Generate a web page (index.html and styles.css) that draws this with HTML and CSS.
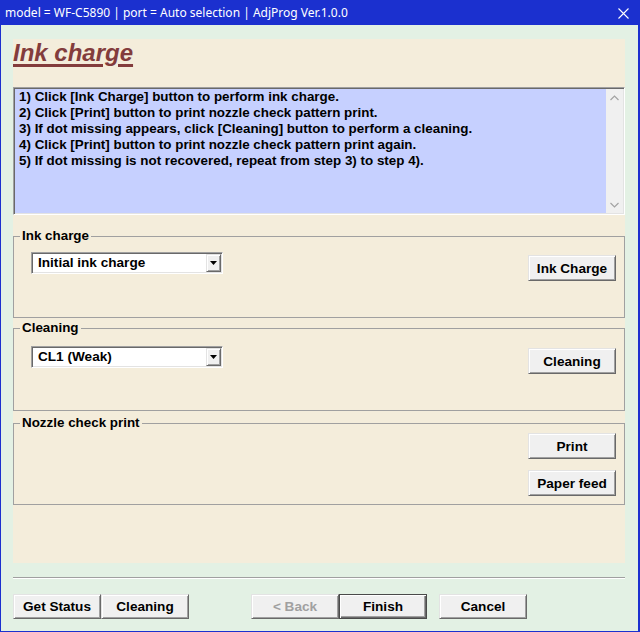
FILE: index.html
```html
<!DOCTYPE html>
<html lang="en">
<head>
    <meta charset="UTF-8">
    <title>AdjProg - Ink charge</title>
    <link rel="stylesheet" href="styles.css">
</head>
<body>
    <div class="window">
        <div class="titlebar">
            <span class="title-text">model = WF-C5890 | port = Auto selection | AdjProg Ver.1.0.0</span>
            <svg class="close-icon" width="11" height="11" viewBox="0 0 11 11">
                <path d="M0.5 0.5 L10.5 10.5 M10.5 0.5 L0.5 10.5" stroke="#fff" stroke-width="1.1" fill="none"/>
            </svg>
        </div>

        <div class="client">
            <div class="panel">
                <h1 class="page-title">Ink charge</h1>

                <div class="info-box">
                    <div class="info-text">
                        <p>1) Click [Ink Charge] button to perform ink charge.</p>
                        <p>2) Click [Print] button to print nozzle check pattern print.</p>
                        <p>3) If dot missing appears, click [Cleaning] button to perform a cleaning.</p>
                        <p>4) Click [Print] button to print nozzle check pattern print again.</p>
                        <p>5) If dot missing is not recovered, repeat from step 3) to step 4).</p>
                    </div>
                    <div class="scrollbar">
                        <svg width="9" height="6" viewBox="0 0 9 6"><path d="M0.5 5 L4.5 1 L8.5 5" stroke="#a3a3a3" stroke-width="1.2" fill="none"/></svg>
                        <svg width="9" height="6" viewBox="0 0 9 6"><path d="M0.5 1 L4.5 5 L8.5 1" stroke="#a3a3a3" stroke-width="1.2" fill="none"/></svg>
                    </div>
                </div>

                <fieldset class="group group-ink">
                    <legend>Ink charge</legend>
                    <div class="group-body">
                        <div class="combo">
                            <span class="combo-value">Initial ink charge</span>
                            <span class="combo-btn"><svg width="7" height="4" viewBox="0 0 7 4"><path d="M0 0 H7 L3.5 4 Z" fill="#000"/></svg></span>
                        </div>
                        <div class="btn-col">
                            <button class="btn">Ink Charge</button>
                        </div>
                    </div>
                </fieldset>

                <fieldset class="group group-clean">
                    <legend>Cleaning</legend>
                    <div class="group-body">
                        <div class="combo">
                            <span class="combo-value">CL1 (Weak)</span>
                            <span class="combo-btn"><svg width="7" height="4" viewBox="0 0 7 4"><path d="M0 0 H7 L3.5 4 Z" fill="#000"/></svg></span>
                        </div>
                        <div class="btn-col">
                            <button class="btn">Cleaning</button>
                        </div>
                    </div>
                </fieldset>

                <fieldset class="group group-nozzle">
                    <legend>Nozzle check print</legend>
                    <div class="group-body">
                        <div class="btn-col">
                            <button class="btn">Print</button>
                            <button class="btn">Paper feed</button>
                        </div>
                    </div>
                </fieldset>
            </div>

            <div class="separator"></div>

            <div class="footer">
                <button class="btn btn-foot">Get Status</button>
                <button class="btn btn-foot">Cleaning</button>
                <button class="btn btn-foot btn-back" disabled>&lt; Back</button>
                <button class="btn btn-foot btn-default">Finish</button>
                <button class="btn btn-foot btn-cancel">Cancel</button>
            </div>
        </div>
    </div>
</body>
</html>
```

FILE: styles.css
```css
* {
    margin: 0;
    padding: 0;
    box-sizing: border-box;
}
body {
    background: #e3f1e4;
    font-family: "Liberation Sans", Arial, sans-serif;
    color: #000;
}
.window {
    width: 640px;
    height: 632px;
    display: flex;
    flex-direction: column;
}

/* title bar */
.titlebar {
    height: 25px;
    background: #1b30cf;
    display: flex;
    align-items: center;
    justify-content: space-between;
    padding: 0 11px 0 5px;
}
.title-text {
    font-family: "Noto Sans", "Open Sans", sans-serif;
    font-size: 12px;
    color: #fff;
    line-height: 25px;
}
.close-icon {
    display: block;
    margin-top: 1px;
}

/* client area */
.client {
    flex: 1;
    background: #e3f1e4;
    border: solid #1b30cf;
    border-width: 0 2px 1px 1px;
    padding: 14px 13px 0 12px;
}
.panel {
    height: 524px;
    background: #f4eddb;
}
.page-title {
    font-size: 24px;
    line-height: 28px;
    font-weight: bold;
    font-style: italic;
    color: #833c3c;
    text-decoration: underline;
    text-decoration-thickness: 3px;
    text-underline-offset: 3px;
    display: inline-block;
}

/* instructions box */
.info-box {
    margin-top: 20px;
    height: 128px;
    display: flex;
    background: #c6d0ff;
    border: 1px solid;
    border-color: #a0a0a0 #fff #fff #a0a0a0;
    box-shadow: inset 1px 1px 0 #696969, inset -1px -1px 0 #e3e3e3;
}
.info-text {
    flex: 1;
    padding: 1px 5px;
    font-size: 13.4px;
    line-height: 16px;
    font-weight: bold;
}
.scrollbar {
    width: 17px;
    margin: 1px 1px 1px 0;
    background: #f0f0f0;
    display: flex;
    flex-direction: column;
    justify-content: space-between;
    align-items: center;
    padding: 6px 0 5px;
}
.scrollbar svg {
    display: block;
}

/* group boxes */
.group {
    border: 1px solid #a0a0a0;
    padding: 0 8px 0 6px;
}
.group legend {
    padding: 0 2px;
    font-size: 13.4px;
    line-height: 16px;
    font-weight: bold;
}
.group-body {
    display: flex;
    justify-content: space-between;
    align-items: flex-start;
}
.group-ink {
    margin-top: 13px;
}
.group-ink .group-body {
    height: 73px;
}
.group-ink .combo {
    margin-top: 8px;
}
.group-ink .btn-col {
    margin-top: 11px;
}
.group-clean {
    margin-top: 2px;
}
.group-clean .group-body {
    height: 74px;
}
.group-clean .combo {
    margin-top: 10px;
}
.group-clean .btn-col {
    margin-top: 12px;
}
.group-nozzle {
    margin-top: 4px;
}
.group-nozzle .group-body {
    height: 73px;
    justify-content: flex-end;
}
.group-nozzle .btn-col {
    margin-top: 2px;
}
.btn-col {
    display: flex;
    flex-direction: column;
    gap: 11px;
}

/* combo box */
.combo {
    margin-left: 11px;
    width: 192px;
    height: 22px;
    display: flex;
    align-items: stretch;
    background: #fff;
    border: 1px solid;
    border-color: #a0a0a0 #fff #fff #a0a0a0;
    box-shadow: inset 1px 1px 0 #696969, inset -1px -1px 0 #e3e3e3;
    padding: 1px;
}
.combo-value {
    flex: 1;
    padding-left: 5px;
    font-size: 13.6px;
    line-height: 18px;
    font-weight: bold;
}
.combo-btn {
    width: 15px;
    background: #f0f0f0;
    border: 1px solid;
    border-color: #e3e3e3 #696969 #696969 #e3e3e3;
    box-shadow: inset 1px 1px 0 #fff, inset -1px -1px 0 #a0a0a0;
    display: flex;
    align-items: center;
    justify-content: center;
}
.combo-btn svg {
    display: block;
}

/* buttons */
.btn {
    width: 88px;
    height: 26px;
    background: #f0f0f0;
    border: 1px solid;
    border-color: #e3e3e3 #696969 #696969 #e3e3e3;
    box-shadow: inset 1px 1px 0 #fff, inset -1px -1px 0 #a0a0a0;
    font-family: "Liberation Sans", Arial, sans-serif;
    font-size: 13.6px;
    font-weight: bold;
    color: #000;
    padding: 0;
}
.btn:disabled {
    color: #a0a0a0;
}
.btn-default {
    border: 1px solid #4a4a4a;
    box-shadow: inset 1px 1px 0 #fff, inset -1px -1px 0 #696969, inset -2px -2px 0 #a0a0a0;
}

/* footer */
.separator {
    margin-top: 14px;
    height: 2px;
    border-top: 1px solid #a0a0a0;
    border-bottom: 1px solid #fff;
}
.footer {
    margin-top: 15px;
    display: flex;
}
.btn-foot {
    height: 25px;
}
.btn-back {
    margin-left: 62px;
}
.btn-cancel {
    margin-left: 12px;
}
```
